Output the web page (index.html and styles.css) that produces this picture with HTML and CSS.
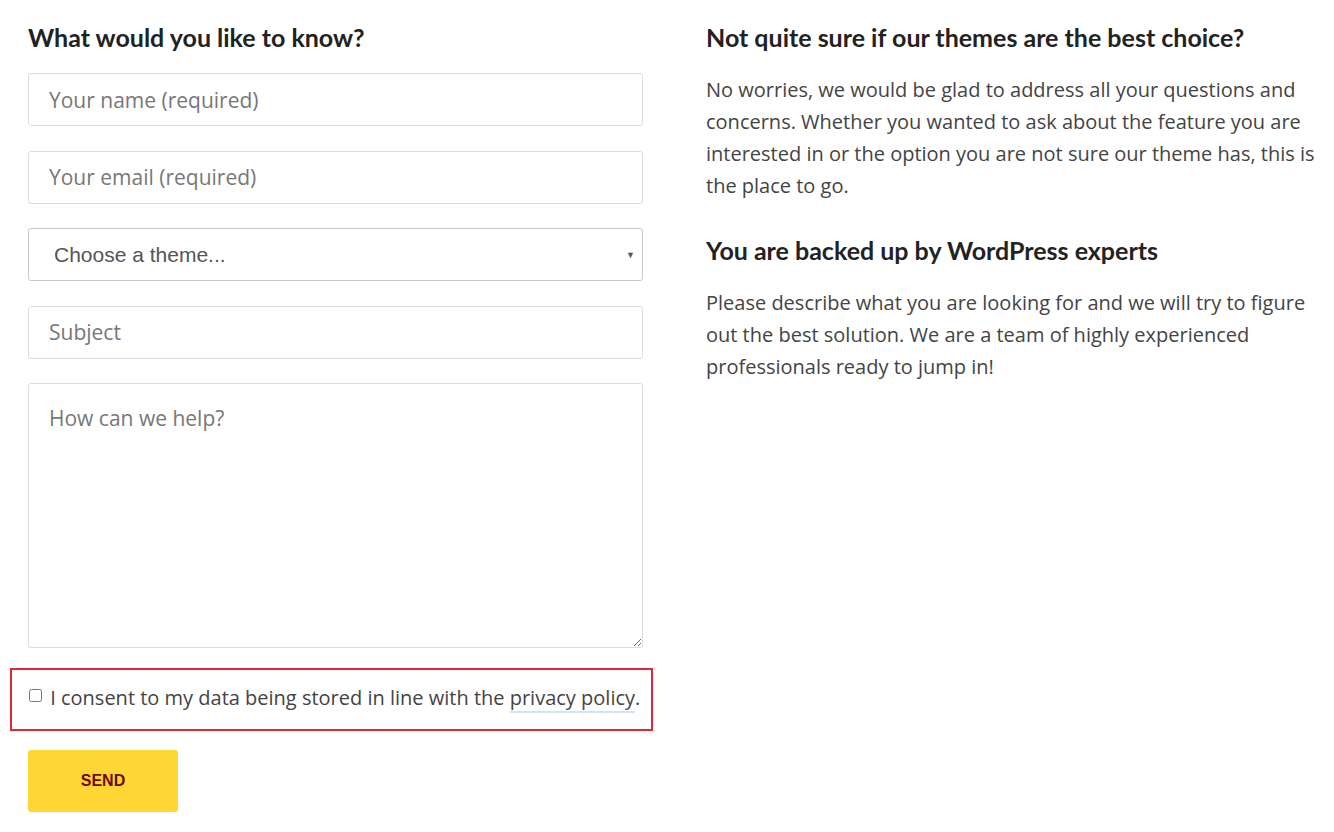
FILE: index.html
```html
<!DOCTYPE html>
<html>
<head>
<meta charset="utf-8">
<link rel="stylesheet" href="styles.css">
</head>
<body>
<div class="page">
  <section class="form-col">
    <h2 class="title">What would you like to know?</h2>
    <form class="form">
      <input class="field" type="text" placeholder="Your name (required)">
      <input class="field" type="email" placeholder="Your email (required)">
      <div class="select-wrap">
        <select class="select">
          <option>Choose a theme...</option>
        </select>
        <span class="arrow">▼</span>
      </div>
      <input class="field" type="text" placeholder="Subject">
      <textarea class="field area" placeholder="How can we help?"></textarea>
      <div class="consent">
        <label class="consent-label"><input type="checkbox" class="check"> I consent to my data being stored in line with the <a class="link" href="#">privacy policy</a>.</label>
      </div>
      <button type="button" class="send">SEND</button>
    </form>
  </section>
  <section class="info-col">
    <h2 class="title">Not quite sure if our themes are the best choice?</h2>
    <p class="text first-text">No worries, we would be glad to address all your questions and concerns. Whether you wanted to ask about the feature you are interested in or the option you are not sure our theme has, this is the place to go.</p>
    <h2 class="title second">You are backed up by WordPress experts</h2>
    <p class="text second-text">Please describe what you are looking for and we will try to figure out the best solution. We are a team of highly experienced professionals ready to jump in!</p>
  </section>
</div>
</body>
</html>
```
FILE: styles.css
```css
html, body { margin: 0; padding: 0; background: #fff; }
body { font-family: "Open Sans", sans-serif; color: #444; }
.page { display: flex; gap: 63px; padding: 21px 13px 0 28px; }
.form-col { width: 615px; flex: none; }
.info-col { width: 615px; flex: none; }
.title { font-family: Lato, sans-serif; font-weight: 700; font-size: 25px; line-height: 32px; color: #222; margin: 0 0 20px; }
.info-col .title { margin-bottom: 19px; }
.info-col .second { margin-top: 32px; }
.first-text { padding-top: 2px; }
.second-text { padding-top: 2px; }
.form { display: flex; flex-direction: column; gap: 24.5px; }
.field { box-sizing: border-box; width: 615px; height: 53px; border: 1px solid #dcdcdc; border-radius: 3px; padding: 0 20px; font-family: "Open Sans", sans-serif; font-size: 21px; color: #555; background: #fff; outline: none; }
.field::placeholder { color: #777; }
.area { height: 265px; padding-top: 20px; resize: vertical; display: block; }
.select-wrap { position: relative; width: 615px; }
.select { display: block; box-sizing: border-box; width: 615px; height: 53px; border: 1px solid #c8c8c8; border-radius: 3px; padding: 0 0 0 25px; font-family: "Liberation Sans", Arial, sans-serif; font-size: 21px; color: #555; background: #fff; appearance: none; -webkit-appearance: none; outline: none; }
.arrow { position: absolute; right: 8px; top: 20px; font-size: 9px; color: #555; pointer-events: none; }
.consent { margin: -4.5px -10px 0 -18px; border: 2px solid #e3262e; height: 63px; box-sizing: border-box; display: flex; align-items: center; padding: 0 0 4px 16px; }
.consent-label { font-size: 20px; color: #444; white-space: nowrap; line-height: 28px; }
.check { width: 13px; height: 13px; margin: 0 3px 0 1px; vertical-align: 3px; }
.link { color: #444; text-decoration: none; border-bottom: 2px solid #cfe3f2; }
.send { width: 150px; height: 62px; margin-top: -6px; background: #ffd633; border: none; border-radius: 3px; font-family: "Liberation Sans", Arial, sans-serif; font-weight: 700; font-size: 16px; color: #6b0a0a; cursor: pointer; }
.text { font-size: 20px; line-height: 32px; margin: 0; color: #444; }
```
